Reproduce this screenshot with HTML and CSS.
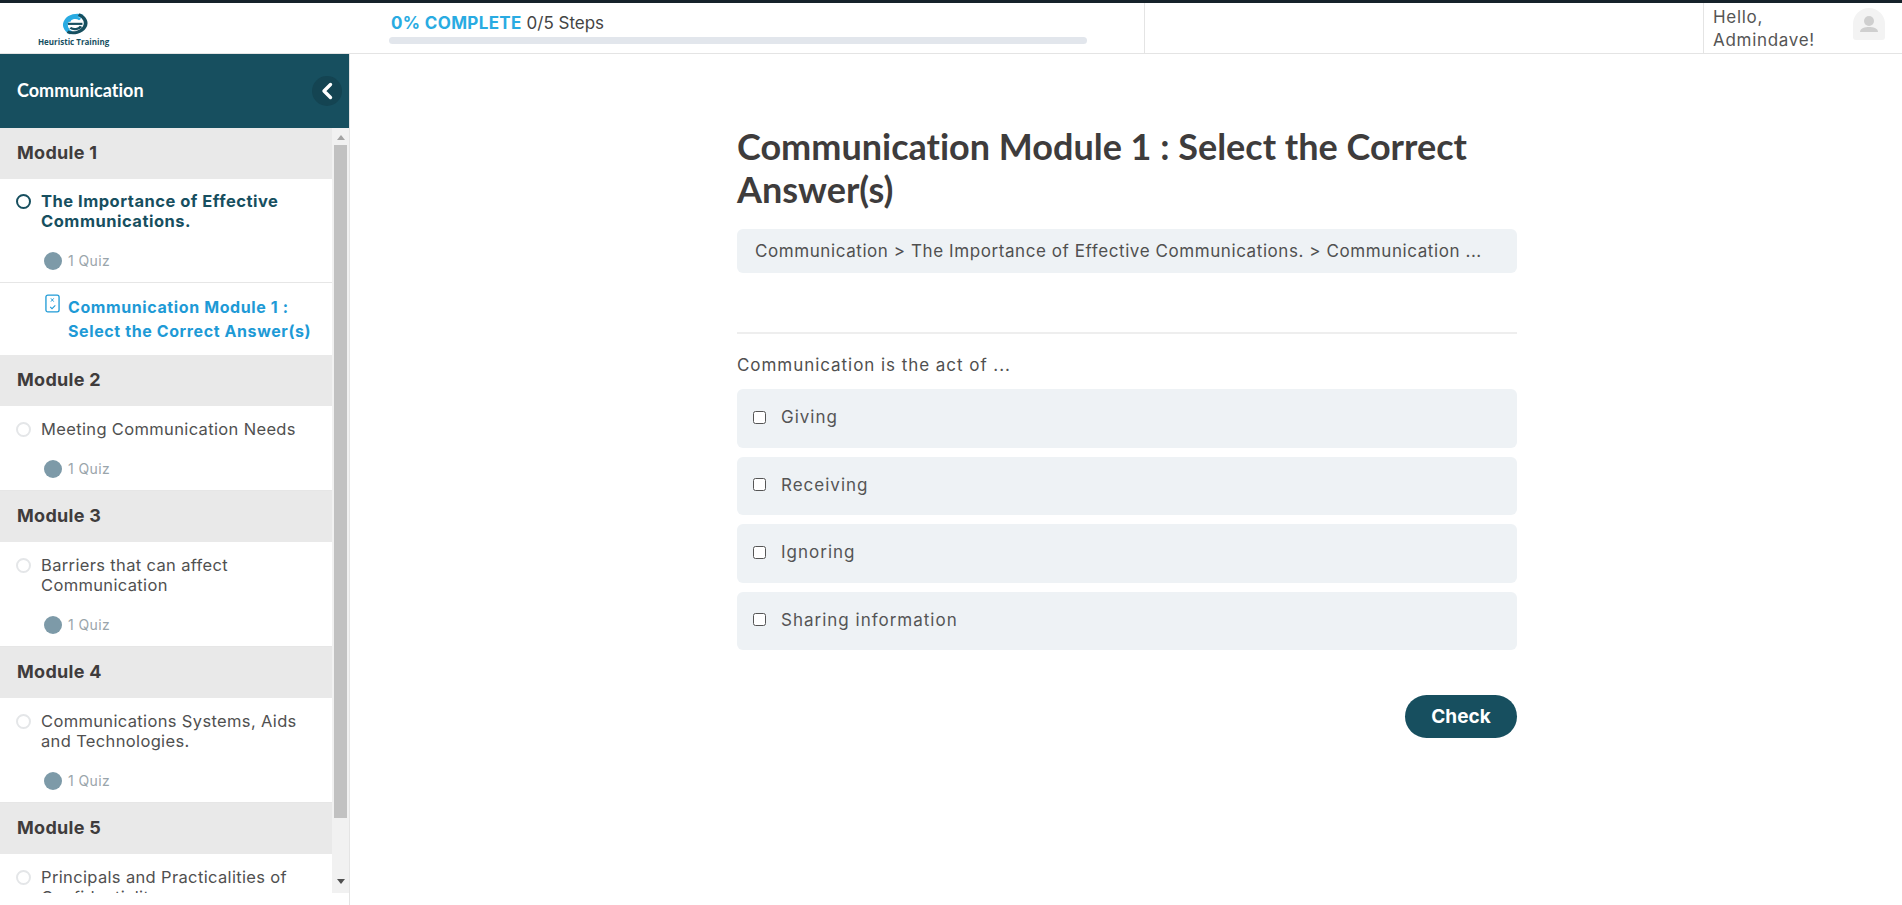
FILE: index.html
```html
<!DOCTYPE html>
<html lang="en">
<head>
<meta charset="utf-8">
<title>Communication Module 1</title>
<link rel="stylesheet" href="styles.css">
</head>
<body>
<header class="topbar">
  <div class="logo">
    <svg class="logo-mark" viewBox="0 0 32 32" preserveAspectRatio="none" aria-hidden="true">
      <path d="M25 6A13 13 0 0 0 13 29" fill="none" stroke="#29abe2" stroke-width="5"/>
      <path d="M9 27.500A13 13 0 0 0 21 3.500" fill="none" stroke="#174f5f" stroke-width="4"/>
      <path d="M10.500 13.500A7 7 0 0 1 22.500 10.500" fill="none" stroke="#29abe2" stroke-width="3"/>
      <path d="M9.500 16.500H25" fill="none" stroke="#174f5f" stroke-width="3"/>
      <path d="M23.500 20A7.500 7.500 0 0 1 12 22" fill="none" stroke="#174f5f" stroke-width="3"/>
    </svg>
    <span class="logo-text">Heuristic Training</span>
  </div>
  <div class="progress">
    <div class="progress-label"><strong>0% COMPLETE</strong> 0/5 Steps</div>
    <div class="progress-track"></div>
  </div>
  <div class="top-spacer"></div>
  <div class="user">
    <span class="hello">Hello,<br>Admindave!</span>
    <span class="avatar">
      <svg viewBox="0 0 32 32" width="32" height="32" aria-hidden="true">
        <circle cx="16" cy="13" r="5" fill="#cfcfcf"/>
        <path d="M7 24c0-4 5-5 9-5s9 1 9 5z" fill="#cfcfcf"/>
      </svg>
    </span>
  </div>
</header>
<div class="shell">
  <aside class="sidebar">
    <div class="side-head">
      <span class="side-title">Communication</span>
      <button class="collapse" aria-label="Collapse">
        <svg viewBox="0 0 14 18" width="14" height="18" aria-hidden="true"><path d="M10.500 2.500 4 9l6.500 6.500" fill="none" stroke="#fff" stroke-width="3.400" stroke-linecap="round" stroke-linejoin="round"/></svg>
      </button>
    </div>
    <div class="side-scroll">
      <div class="side-list">
        <div class="module">Module 1</div>
        <div class="lesson current">
          <span class="ring"></span>
          <div class="lesson-title">The Importance of Effective Communications.</div>
        </div>
        <div class="quiz-count lined"><span class="dot"></span>1 Quiz</div>
        <a class="quiz-link">
          <svg viewBox="0 0 16 20" width="15" height="19" aria-hidden="true"><rect x="1" y="1" width="14" height="18" rx="2" fill="none" stroke="#1e9ad6" stroke-width="1.400"/><path d="M6.300 4.500l3 3.500m0-3.500-3 3.500" stroke="#1e9ad6" stroke-width="1"/><path d="M5.500 13.500l2 2 3.500-3.500" fill="none" stroke="#1e9ad6" stroke-width="1.100"/></svg>
          <span>Communication Module 1 :<br>Select the Correct Answer(s)</span>
        </a>
        <div class="module">Module 2</div>
        <div class="lesson">
          <span class="ring"></span>
          <div class="lesson-title">Meeting Communication Needs</div>
        </div>
        <div class="quiz-count lined"><span class="dot"></span>1 Quiz</div>
        <div class="module">Module 3</div>
        <div class="lesson">
          <span class="ring"></span>
          <div class="lesson-title">Barriers that can affect Communication</div>
        </div>
        <div class="quiz-count lined"><span class="dot"></span>1 Quiz</div>
        <div class="module">Module 4</div>
        <div class="lesson">
          <span class="ring"></span>
          <div class="lesson-title">Communications Systems, Aids and Technologies.</div>
        </div>
        <div class="quiz-count lined"><span class="dot"></span>1 Quiz</div>
        <div class="module">Module 5</div>
        <div class="lesson">
          <span class="ring"></span>
          <div class="lesson-title">Principals and Practicalities of Confidentiality</div>
        </div>
      </div>
      <div class="scrollbar">
        <span class="arrow up"></span>
        <span class="thumb"></span>
        <span class="arrow down"></span>
      </div>
    </div>
  </aside>
  <main class="main">
    <div class="content">
      <h1>Communication Module 1 : Select the Correct Answer(s)</h1>
      <div class="crumbs">Communication &gt; The Importance of Effective Communications. &gt; Communication ...</div>
      <hr class="rule">
      <p class="question">Communication is the act of ...</p>
      <ul class="options">
        <li class="option"><span class="box"></span>Giving</li>
        <li class="option"><span class="box"></span>Receiving</li>
        <li class="option"><span class="box"></span>Ignoring</li>
        <li class="option"><span class="box"></span>Sharing information</li>
      </ul>
      <div class="actions"><button class="check">Check</button></div>
    </div>
  </main>
</div>
</body>
</html>
```

FILE: styles.css
```css
* { box-sizing: border-box; }
html, body { height: 100%; }
body {
  margin: 0;
  height: 905px;
  overflow: hidden;
  background: #fff;
  color: #4a4a4a;
  font-family: Inter, "Liberation Sans", sans-serif;
  display: flex;
  flex-direction: column;
}
.topbar {
  flex: none;
  height: 54px;
  display: flex;
  border-top: 3px solid #16222a;
  border-bottom: 1px solid #e4e4e4;
}
.logo {
  width: 349px;
  padding: 9px 0 0 38px;
  display: flex;
  flex-direction: column;
  align-items: flex-start;
}
.logo-mark { width: 30px; height: 23px; margin-left: 21px; display: block; }
.logo-text {
  margin-top: 2px;
  font: 700 8px/10px "Open Sans", sans-serif;
  color: #174f5f;
  white-space: nowrap;
}
.progress {
  width: 796px;
  padding: 9px 0 0 40px;
  border-right: 1px solid #e4e4e4;
}
.progress-label {
  font-size: 17px;
  line-height: 22px;
  color: #444;
  padding-left: 2px;
}
.progress-label strong { color: #29abe2; font-weight: 700; letter-spacing: .35px; }
.progress-track {
  width: 698px;
  height: 7px;
  margin-top: 3px;
  border-radius: 4px;
  background: #e2e6ec;
}
.top-spacer { width: 559px; border-right: 1px solid #e4e4e4; }
.user {
  flex: 1;
  display: flex;
  padding-left: 9px;
}
.hello {
  width: 140px;
  font-size: 17px;
  line-height: 23px;
  padding-top: 3px;
  color: #555;
  letter-spacing: .7px;
}
.avatar {
  width: 32px;
  height: 32px;
  margin-top: 5px;
  border-radius: 16px 16px 3px 3px;
  background: #f3f3f3;
  display: block;
}
.avatar svg { display: block; }
.shell { flex: 1; display: flex; min-height: 0; }
.sidebar {
  width: 350px;
  flex: none;
  border-right: 1px solid #e4e4e4;
  display: flex;
  flex-direction: column;
  height: 851px;
}
.side-head {
  flex: none;
  height: 74px;
  background: #174f5f;
  color: #fff;
  display: flex;
  align-items: center;
  justify-content: space-between;
  padding: 0 7px 0 17px;
}
.side-title {
  margin-bottom: 2px;
  font: 700 18px/22px Lato, sans-serif;
  font-variant-ligatures: none;
}
.collapse {
  width: 30px;
  height: 30px;
  padding: 0;
  border: 0;
  border-radius: 50%;
  background: #144452;
  display: flex;
  align-items: center;
  justify-content: center;
}
.side-scroll {
  height: 765px;
  display: flex;
  overflow: hidden;
}
.side-list { width: 332px; flex: none; overflow: hidden; }
.module {
  height: 51px;
  padding-left: 17px;
  background: #e9e9e9;
  color: #3f3c3c;
  font-size: 18px;
  font-weight: 700;
  letter-spacing: .3px;
  line-height: 50px;
}
.lesson {
  display: flex;
  padding: 13px 20px 0 16px;
  gap: 10px;
  line-height: 20px;
  font-size: 16.500px;
  letter-spacing: .35px;
}
.lesson.current { padding-top: 12px; }
.ring {
  flex: none;
  width: 15px;
  height: 15px;
  margin-top: 3px;
  border-radius: 50%;
  border: 2px solid #e4e6e8;
}
.current .ring { border-color: #174f5f; }
.current .lesson-title { color: #174f5f; font-weight: 700; letter-spacing: .5px; }
.lesson-title { color: #505050; }
.quiz-count {
  display: flex;
  align-items: center;
  padding: 8px 0 0 44px;
  font-size: 14px;
  color: #9aa5ab;
  letter-spacing: .4px;
}
.quiz-count.lined { border-bottom: 1px solid #e6e6e6; height: 52px; }
.dot {
  width: 18px;
  height: 18px;
  margin-right: 6px;
  border-radius: 50%;
  background: #7d9aa8;
}
.quiz-link {
  display: flex;
  gap: 8px;
  height: 72px;
  padding: 12px 0 0 45px;
  color: #1e9ad6;
  font-size: 16px;
  font-weight: 700;
  line-height: 24px;
  letter-spacing: .6px;
  white-space: nowrap;
}
.quiz-link svg { flex: none; margin-top: -1px; }
.scrollbar {
  flex: 1;
  background: #f1f1f1;
  display: flex;
  flex-direction: column;
  align-items: center;
}
.thumb { width: 13px; height: 673px; background: #c1c1c1; }
.arrow { width: 0; height: 0; border: 4px solid transparent; }
.arrow.up { border-bottom: 5px solid #a3a3a3; border-top: 0; margin: 7px 0 5px; }
.arrow.down { border-top: 5px solid #505050; border-bottom: 0; margin-top: 61px; }
.main {
  flex: 1;
  display: flex;
  justify-content: center;
  padding: 71px 0 0 2px;
}
.content { width: 780px; }
h1 {
  margin: 0;
  font: 700 36px/43px Lato, sans-serif;
  font-variant-ligatures: none;
  color: #3e3c3c;
}
.crumbs {
  margin-top: 18px;
  height: 44px;
  padding: 0 18px;
  border-radius: 6px;
  background: #eef2f5;
  font-size: 17px;
  line-height: 44px;
  color: #505050;
  letter-spacing: .58px;
  white-space: nowrap;
  overflow: hidden;
}
.rule { margin: 59px 0 0; border: 0; border-top: 2px solid #eeeeee; }
.question {
  margin: 20px 0 0;
  font-size: 17px;
  line-height: 22px;
  color: #505050;
  letter-spacing: .95px;
}
.options { list-style: none; margin: 13px 0 0; padding: 0; display: flex; flex-direction: column; gap: 9px; }
.option {
  height: 58.500px;
  padding: 0 0 2px 16px;
  display: flex;
  align-items: center;
  border-radius: 6px;
  background: #eef2f5;
  font-size: 17px;
  letter-spacing: 1px;
  color: #555;
}
.box {
  width: 13px;
  height: 13px;
  margin-right: 15px;
  border: 1px solid #555;
  border-radius: 2.500px;
  background: #fff;
}
.actions { display: flex; justify-content: flex-end; margin-top: 45px; }
.check {
  width: 112px;
  height: 43px;
  border: 0;
  border-radius: 22px;
  background: #174f5f;
  color: #fff;
  font: 700 19px/1 Inter, sans-serif;
}
```
